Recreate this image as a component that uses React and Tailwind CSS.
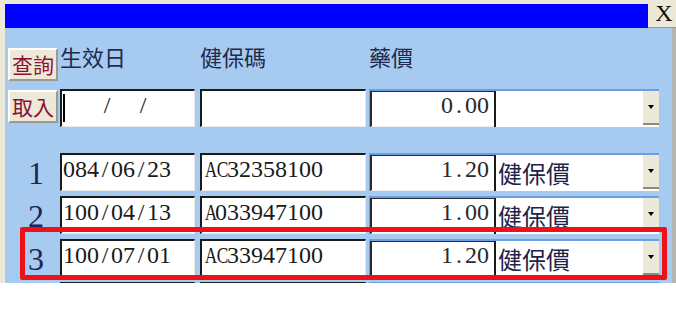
import React from 'react';

// fixed-width cells, the way MingLiU lays out ASCII
function Mono({ text }) {
    return (
        <span className="inline-flex">
            {[...text].map((c, i) => (
                <span
                    key={i}
                    className={/[A-Z]/.test(c)
                        ? 'inline-block w-[12px] text-center scale-x-[0.72]'
                        : 'inline-block w-[12px] text-center'}
                >
                    {c === ' ' ? '\u00a0' : c}
                </span>
            ))}
        </span>
    );
}

function WinButton({ children }) {
    return (
        <div className="w-[50px] h-[33px] flex items-center justify-center bg-[#ece9d8] border-t-2 border-l-2 border-t-white border-l-white border-b-2 border-r-2 border-b-[#9a9a90] border-r-[#9a9a90] text-[21px] leading-none text-[#8c1034] font-['Noto_Sans_CJK_TC',sans-serif]">
            {children}
        </div>
    );
}

function Row({ label, date, code, price, kind, cursor }) {
    return (
        <div className="flex h-[38px] shrink-0">
            {label !== undefined ? (
                <div className="w-[52px] flex items-center justify-center pl-[4px] pt-[2px] text-[32px] leading-none text-[#1c2658] font-['Liberation_Serif',serif]">
                    {label}
                </div>
            ) : (
                <div className="w-[52px] flex items-start">
                    <div className="mt-[1px]">
                        <WinButton>取入</WinButton>
                    </div>
                </div>
            )}
            <div className="w-[135px] h-full bg-white border-t-2 border-l-2 border-t-[#1a1a1a] border-l-[#1a1a1a] border-b border-r border-b-[#e8e8e8] border-r-[#e8e8e8] pl-[1px] pt-[2px] text-[24px] leading-[24px] text-[#1a1a1a] font-['Liberation_Serif',serif] flex">
                {cursor && <span className="w-[2px] h-[28px] bg-black mt-[1px]" />}
                <Mono text={date} />
            </div>
            <div className="ml-[5px] w-[166px] h-full bg-white border-t-2 border-l-2 border-t-[#1a1a1a] border-l-[#1a1a1a] border-b border-r border-b-[#e8e8e8] border-r-[#e8e8e8] pl-[1px] pt-[2px] text-[24px] leading-[24px] text-[#1a1a1a] font-['Liberation_Serif',serif]">
                <Mono text={code} />
            </div>
            <div className="ml-[3px] w-[290px] h-full flex border-t-2 border-l border-t-[#6d9de6] border-l-[#6d9de6]">
                <div className="w-[124px] h-full bg-white border-t border-l-2 border-t-[#2a2a2a] border-l-[#2a2a2a] border-b border-b-[#f0f0f0] flex justify-end pr-[5px] pt-[1px] text-[24px] leading-[24px] text-[#2a2a2a] font-['Liberation_Serif',serif]">
                    <Mono text={price} />
                </div>
                <div className="flex-1 h-full bg-white border-l-2 border-l-[#1a1a1a] flex">
                    <div className="flex-1 flex items-center pl-[2px] text-[24px] leading-none text-[#1e2448] font-['Noto_Sans_CJK_TC',sans-serif]">
                        {kind}
                    </div>
                    <div className="w-[16px] h-[34px] bg-[#ece9d8] border-b-2 border-b-[#8a8a80] flex items-center justify-center">
                        <span className="w-0 h-0 border-x-[3px] border-x-transparent border-t-[4px] border-t-black" />
                    </div>
                </div>
            </div>
        </div>
    );
}

const rows = [
    { id: 1, label: '1', date: '084/06/23', code: 'AC32358100', price: '1.20', kind: '健保價' },
    { id: 2, label: '2', date: '100/04/13', code: 'A033947100', price: '1.00', kind: '健保價' },
    { id: 3, label: '3', date: '100/07/01', code: 'AC33947100', price: '1.20', kind: '健保價' },
    { id: 4, label: '', date: '', code: '', price: '', kind: '' },
];

export default function App() {
    return (
        <div className="w-[676px] h-[329px] bg-white overflow-hidden relative">
            <div className="h-[283px] flex flex-col bg-[#ece9d8] pl-[5px]">
                {/* title bar */}
                <div className="flex items-start shrink-0">
                    <div className="flex-1 h-[24px] mt-[4px] bg-[#0000ff]" />
                    <div className="w-[28px] h-[28px] bg-[#ece9d8] border-b border-b-[#9c9c94] flex items-start justify-center pl-[4px] pt-[1px] text-[24px] leading-[24px] text-[#111] font-['Liberation_Serif',serif]">
                        X
                    </div>
                </div>
                <div className="flex-1 flex min-h-0">
                    <div className="flex-1 bg-[#a6caf0] pl-[3px] pt-[20px] flex flex-col overflow-hidden">
                        {/* header */}
                        <div className="flex h-[33px] shrink-0">
                            <WinButton>查詢</WinButton>
                            <div className="ml-[2px] w-[140px] text-[22px] leading-[22px] text-[#1f2a4c] font-['Noto_Sans_CJK_TC',sans-serif] -mt-[3px]">
                                生效日
                            </div>
                            <div className="w-[169px] text-[22px] leading-[22px] text-[#1f2a4c] font-['Noto_Sans_CJK_TC',sans-serif] -mt-[3px]">
                                健保碼
                            </div>
                            <div className="text-[22px] leading-[22px] text-[#1f2a4c] font-['Noto_Sans_CJK_TC',sans-serif] -mt-[3px]">
                                藥價
                            </div>
                        </div>
                        <div className="mt-[8px]">
                            <Row date="   /  /" code="" price="0.00" kind="" cursor />
                        </div>
                        <div className="mt-[26px] flex flex-col gap-[5px]">
                            {rows.map(r => (
                                <Row key={r.id} {...r} />
                            ))}
                        </div>
                    </div>
                    <div className="w-[4px] bg-[#b4b4b0]" />
                </div>
            </div>

            {/* red highlight drawn over row 3 */}
            <div className="absolute left-[20px] top-[227px] w-[647px] h-[53px] border-[5px] border-[#ee1118] rounded-[2px] pointer-events-none" />
        </div>
    );
}
